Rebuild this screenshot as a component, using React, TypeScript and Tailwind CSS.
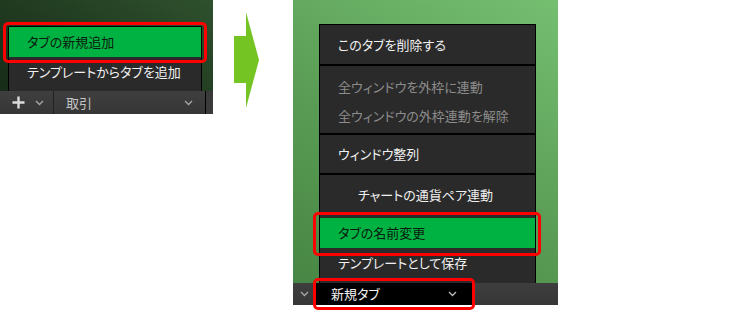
import React from "react";

const font = "font-['Noto_Sans_CJK_JP','Noto_Sans',sans-serif] [font-feature-settings:'palt']";

function Chevron({ color = "#a8a8a8" }: { color?: string }) {
  return (
    <svg width="9" height="6" viewBox="0 0 9 6" className="block">
      <polyline points="1,1 4.5,4.5 8,1" fill="none" stroke={color} strokeWidth="1.3" />
    </svg>
  );
}

function RedBox({ className }: { className: string }) {
  return <div className={`absolute border-[3px] border-[#ff0000] rounded-[5px] ${className}`} />;
}

export default function App() {
  return (
    <div className={`relative w-[732px] h-[312px] bg-white flex items-start overflow-hidden ${font}`}>
      {/* Left panel */}
      <div className="relative w-[213px] h-[115px] flex flex-col">
        <div className="h-[91px] bg-[linear-gradient(30deg,#172c18_0%,#223d22_50%,#2f512d_100%)] pt-[26px] pl-[8px]">
          <div className="w-[194px] h-[65px] bg-[#2a2a2a] border-x border-t border-black flex flex-col">
            <div className="h-[30px] bg-[#00b241] flex items-center pl-[18px] text-[13px] text-[#0c1a10]">タブの新規追加</div>
            <div className="h-[30px] flex items-center pl-[18px] text-[13px] text-[#f0f0f0]">テンプレートからタブを追加</div>
          </div>
        </div>
        <div className="h-[23px] bg-[linear-gradient(#3f3f3f,#363636)] flex items-center">
          <div className="w-[54px] h-full flex items-center pl-[12px] gap-[10px] border-r border-[#222]">
            <svg width="13" height="13" viewBox="0 0 13 13" className="block">
              <path d="M6.5 0.5V12.5M0.5 6.5H12.5" stroke="#dcdcdc" strokeWidth="2.4" />
            </svg>
            <Chevron />
          </div>
          <div className="w-[152px] h-full flex items-center justify-between pl-[12px] pr-[12px] border-r border-black">
            <span className="text-[13px] text-[#c4c4c4]">取引</span>
            <Chevron />
          </div>
          <div className="flex-1 h-full bg-[#3a3a3a]" />
        </div>
        <RedBox className="left-[3px] top-[22px] w-[204px] h-[41px]" />
      </div>

      {/* Arrow */}
      <div className="w-[80px] h-[115px]">
        <svg width="80" height="115" viewBox="0 0 80 115" className="block">
          <polygon points="21,36 33,36 33,12 46,60 33,108 33,83 21,83" fill="#74c424" />
        </svg>
      </div>

      {/* Right panel */}
      <div className="relative w-[265px] h-[312px] flex flex-col">
        <div className="h-[283px] bg-[linear-gradient(30deg,#478644_0%,#5a9c55_45%,#75bf71_100%)] pt-[24px] pl-[26px] overflow-hidden">
          <div className="w-[217px] h-[270px] bg-[#2a2a2a] border border-black flex flex-col text-[13px] text-[#f0f0f0]">
            <div className="h-[39px] flex items-center pl-[18px]">このタブを削除する</div>
            <div className="h-[2px] bg-black" />
            <div className="pt-[6px] pb-[3px] flex flex-col text-[#8c8c8c]">
              <div className="h-[29px] flex items-center pl-[18px]">全ウィンドウを外枠に連動</div>
              <div className="h-[29px] flex items-center pl-[18px]">全ウィンドウの外枠連動を解除</div>
            </div>
            <div className="h-[2px] bg-black" />
            <div className="h-[38px] flex items-center pl-[18px]">ウィンドウ整列</div>
            <div className="h-[2px] bg-black" />
            <div className="pt-[5px] flex flex-col">
              <div className="h-[30px] flex items-center pl-[38px]">チャートの通貨ペア連動</div>
              <div className="h-[8px]" />
              <div className="h-[30px] flex items-center pl-[18px] bg-[#00b241] text-[#0c1a10]">タブの名前変更</div>
              <div className="h-[30px] flex items-center pl-[18px]">テンプレートとして保存</div>
            </div>
          </div>
        </div>
        <div className="h-[22px] bg-[linear-gradient(#3e3e3e,#363636)] flex items-stretch">
          <div className="w-[22px] flex items-center justify-center">
            <Chevron />
          </div>
          <div className="w-[157px] bg-black flex items-center justify-between pl-[16px] pr-[15px]">
            <span className="text-[13px] text-[#f2f2f2]">新規タブ</span>
            <Chevron color="#bdbdbd" />
          </div>
          <div className="flex-1" />
        </div>
        <RedBox className="left-[20px] top-[212px] w-[228px] h-[44px]" />
        <RedBox className="left-[20px] top-[278px] w-[162px] h-[32px]" />
      </div>
    </div>
  );
}
